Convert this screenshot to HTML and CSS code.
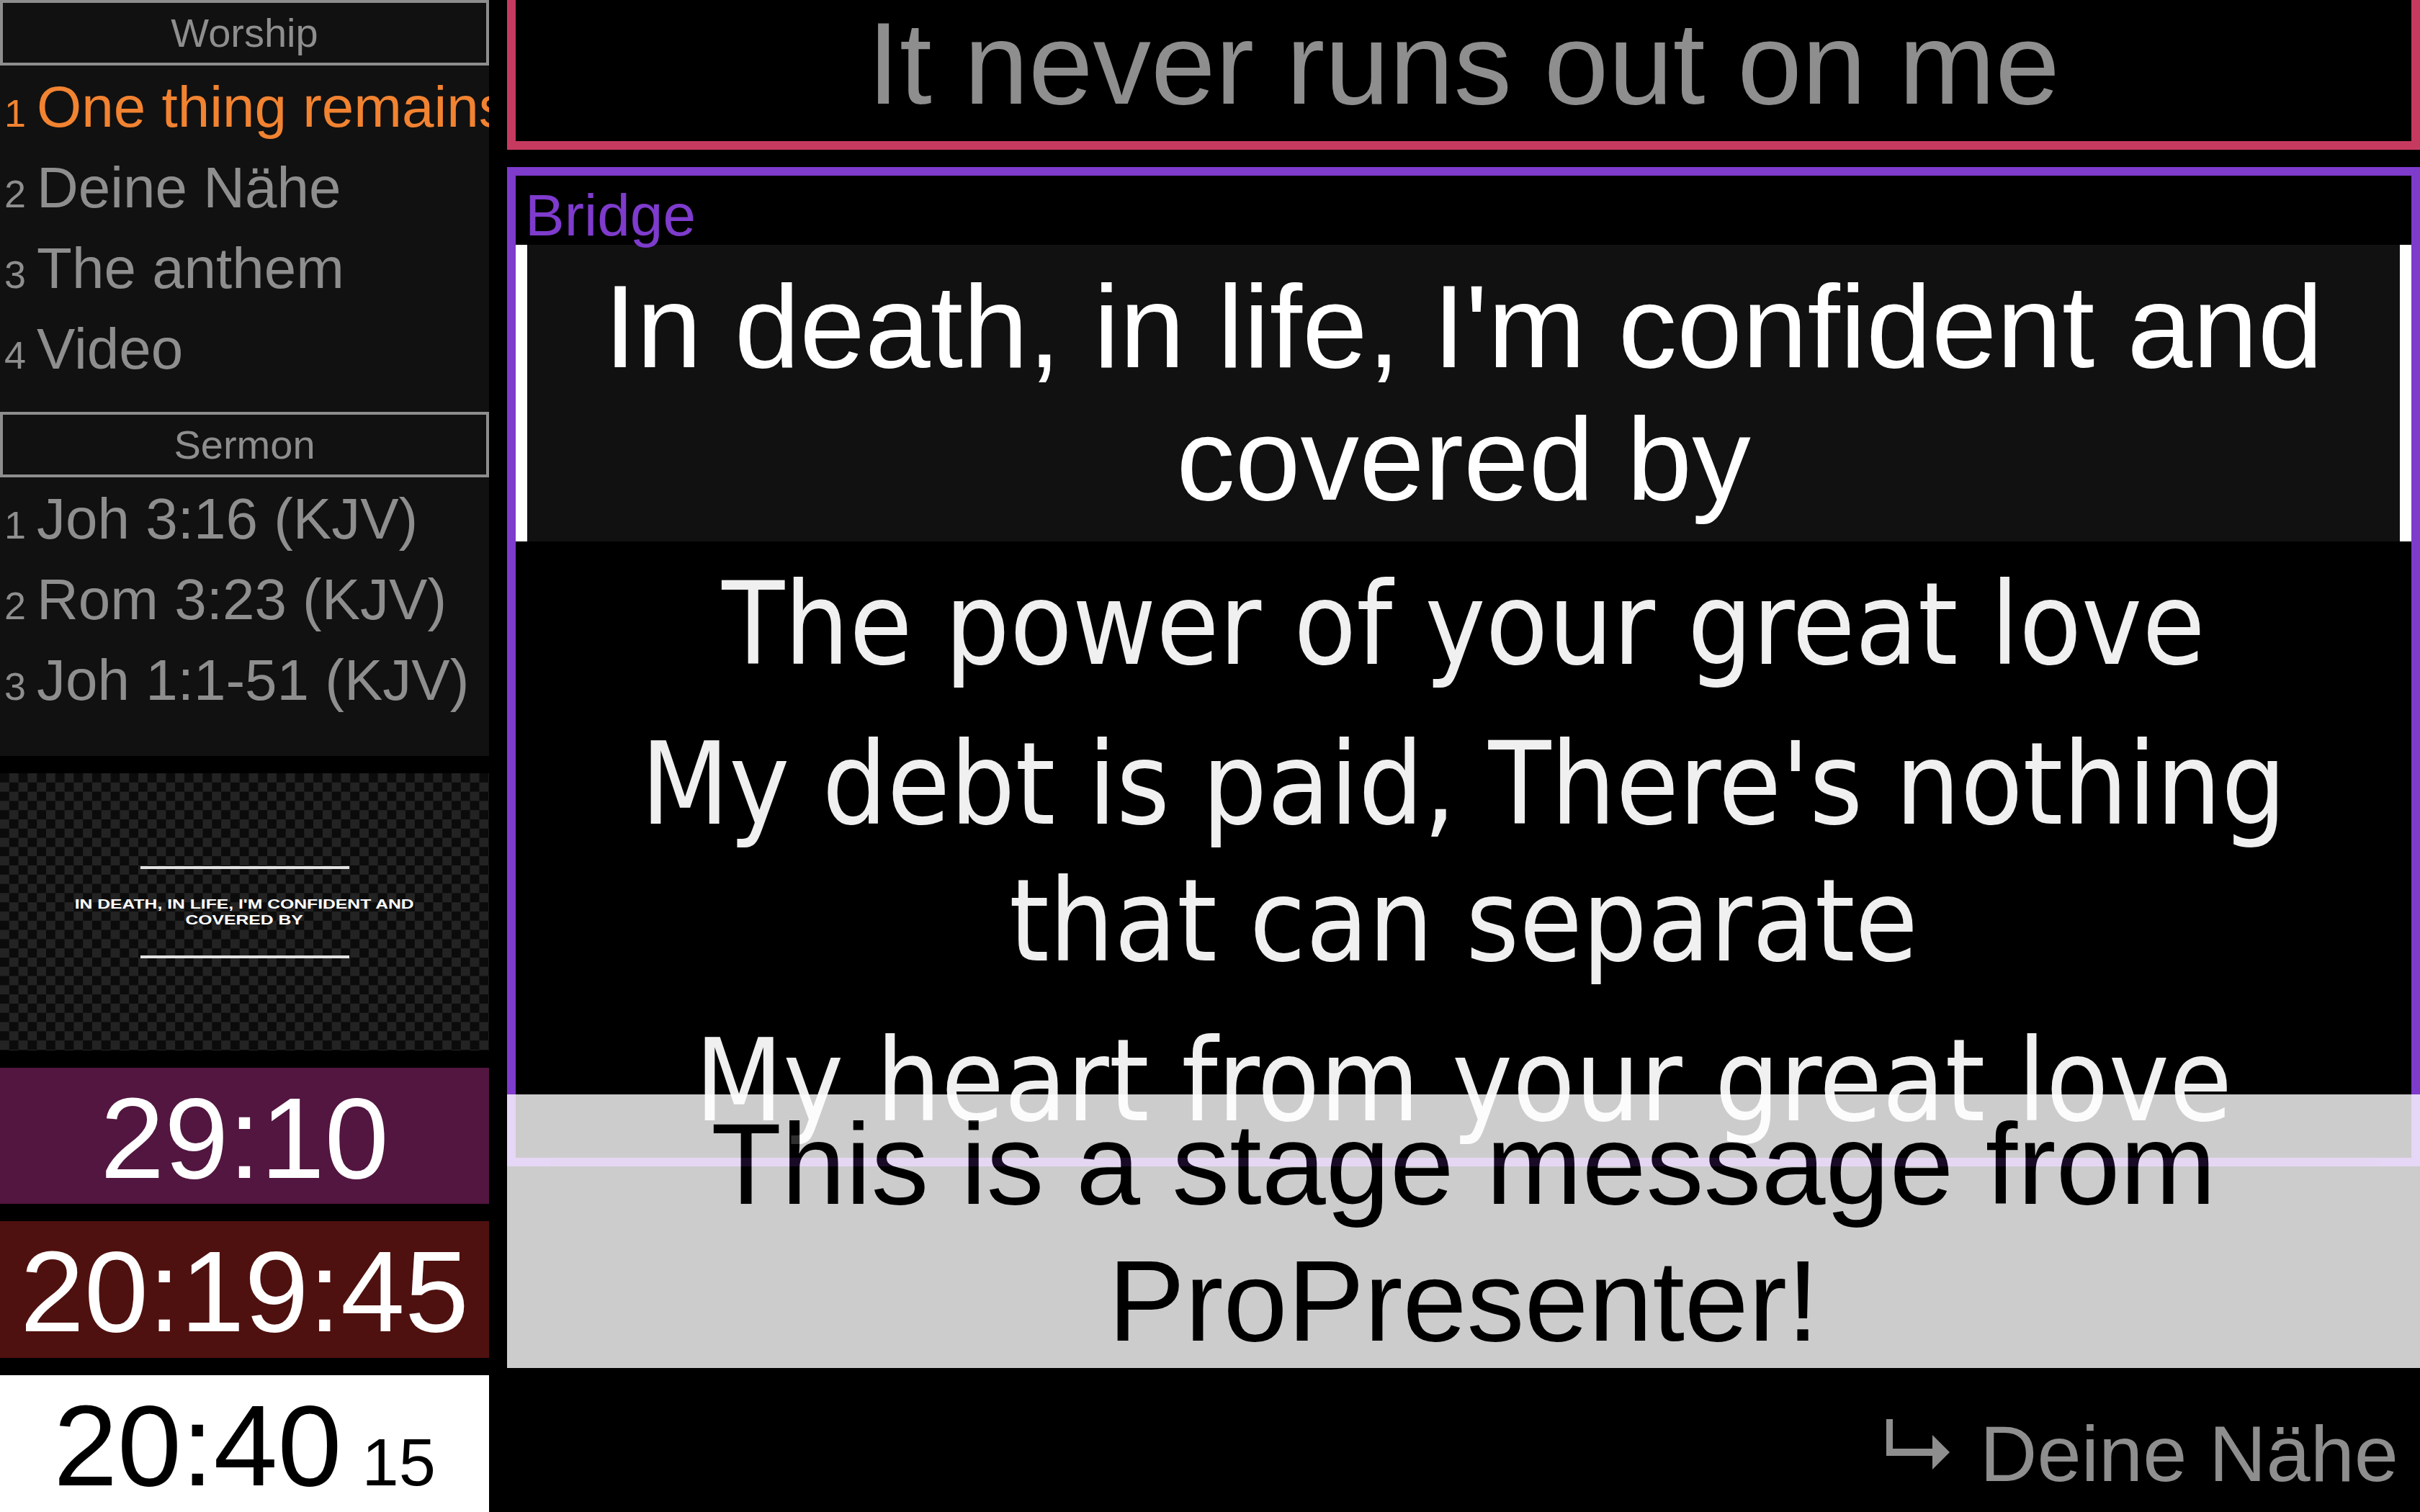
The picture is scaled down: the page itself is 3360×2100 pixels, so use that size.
FILE: index.html
```html
<!DOCTYPE html>
<html lang="en">
<head>
<meta charset="utf-8">
<title>Stage Display</title>
<link rel="stylesheet" href="styles.css">
</head>
<body>
<div class="stage">
  <aside class="side">
    <div class="panel">
      <section class="group">
        <div class="group-title">Worship</div>
        <ul class="items">
          <li class="item current"><span class="num">1 </span>One thing remains</li>
          <li class="item"><span class="num">2 </span>Deine Nähe</li>
          <li class="item"><span class="num">3 </span>The anthem</li>
          <li class="item"><span class="num">4 </span>Video</li>
        </ul>
      </section>
      <section class="group">
        <div class="group-title">Sermon</div>
        <ul class="items">
          <li class="item"><span class="num">1 </span>Joh 3:16 (KJV)</li>
          <li class="item"><span class="num">2 </span>Rom 3:23 (KJV)</li>
          <li class="item"><span class="num">3 </span>Joh 1:1-51 (KJV)</li>
        </ul>
      </section>
    </div>
    <div class="thumb">
      <div class="thumb-rule"></div>
      <div class="thumb-text">IN DEATH, IN LIFE, I'M CONFIDENT AND<br>COVERED BY</div>
      <div class="thumb-rule"></div>
    </div>
    <div class="timer timer-countdown">29:10</div>
    <div class="timer timer-event">20:19:45</div>
    <div class="timer clock">20:40<span class="secs">15</span></div>
  </aside>
  <main class="main">
    <div class="prev-slide">It never runs out on me</div>
    <div class="current-group">
      <div class="group-label">Bridge</div>
      <div class="slide slide-live">In death, in life, I'm confident and covered by</div>
      <div class="slide">The power of your great love</div>
      <div class="slide">My debt is paid, There's nothing<br>that can separate</div>
      <div class="slide">My heart from your great love</div>
    </div>
    <div class="next-song">
      <svg class="next-arrow" viewBox="0 0 88 70" aria-hidden="true">
        <rect x="0" y="0" width="9" height="51" fill="#8e8e8e"/>
        <rect x="0" y="41" width="66" height="10" fill="#8e8e8e"/>
        <polygon points="64,22 88,46 64,70" fill="#8e8e8e"/>
      </svg>
      <span class="next-title">Deine Nähe</span>
    </div>
    <div class="stage-message">This is a stage message from ProPresenter!</div>
  </main>
</div>
</body>
</html>
```

FILE: styles.css
```css
* {
  box-sizing: border-box;
}

html,
body {
  margin: 0;
  background: #000;
}

body {
  width: 3360px;
  height: 2100px;
  overflow: hidden;
  font-family: "Liberation Sans", Arial, Helvetica, sans-serif;
}

.stage {
  display: flex;
  gap: 25px;
  height: 2100px;
}

/* ---------- left column ---------- */

.side {
  width: 679px;
  flex: none;
  display: flex;
  flex-direction: column;
  gap: 24px;
}

.panel {
  height: 1050px;
  flex: none;
  background: #111;
  overflow: hidden;
  display: flex;
  flex-direction: column;
  gap: 31px;
}

.group-title {
  height: 91px;
  border: 4px solid #8e8e8e;
  color: #8e8e8e;
  font-size: 56px;
  line-height: 83px;
  text-align: center;
}

.items {
  list-style: none;
  margin: 0;
  padding: 2px 0 0 6px;
}

.item {
  height: 112px;
  font-size: 80px;
  line-height: 112px;
  color: #8e8e8e;
  white-space: nowrap;
}

.item.current {
  color: #f28331;
}

.num {
  font-size: 54px;
  line-height: 0;
}

.thumb {
  height: 385px;
  flex: none;
  background-color: #0b0b0b;
  background-image: conic-gradient(#232323 25%, #0b0b0b 0 50%, #232323 0 75%, #0b0b0b 0);
  background-size: 25.6px 25.6px;
  display: flex;
  flex-direction: column;
  align-items: center;
  justify-content: center;
  gap: 38px;
}

.thumb-rule {
  width: 290px;
  height: 4px;
  background: #e2e2e2;
}

.thumb-text {
  color: #fff;
  font-weight: 700;
  font-size: 19px;
  line-height: 22px;
  text-align: center;
  white-space: nowrap;
  transform: scaleX(1.3);
}

.timer {
  flex: none;
  height: 189px;
  padding-top: 6px;
  color: #fff;
  font-size: 160px;
  line-height: 183px;
  text-align: center;
  white-space: nowrap;
}

.timer-countdown {
  background: #521640;
}

.timer-event {
  height: 190px;
  background: #4f110f;
}

.clock {
  flex: 1;
  background: #fff;
  color: #000;
}

.secs {
  font-size: 92px;
  margin-left: 28px;
}

/* ---------- main column ---------- */

.main {
  flex: 1;
  min-width: 0;
  position: relative;
  display: flex;
  flex-direction: column;
  gap: 24px;
}

.prev-slide {
  flex: none;
  border: 12px solid #c63a60;
  border-top: 0;
  padding-bottom: 20px;
  color: #8e8e8e;
  font-size: 161px;
  line-height: 176px;
  text-align: center;
  white-space: nowrap;
  overflow: hidden;
}

.current-group {
  flex: none;
  height: 1388px;
  border: 12px solid #7e3bcc;
  overflow: hidden;
}

.group-label {
  color: #7e3bcc;
  font-size: 82px;
  line-height: 82px;
  padding: 14px 0 0 13px;
}

.slide {
  color: #f0f0f0;
  font-family: "DejaVu Sans Condensed", "DejaVu Sans", sans-serif;
  font-size: 158px;
  line-height: 190px;
  padding: 16px 0;
  text-align: center;
  white-space: nowrap;
}

.slide-live {
  font-family: "Liberation Sans", Arial, Helvetica, sans-serif;
  color: #fff;
  background: #111;
  border-left: 16px solid #fff;
  border-right: 16px solid #fff;
  font-size: 163px;
  line-height: 184px;
  padding: 22px 0;
  margin-bottom: 4px;
  white-space: normal;
}

.next-song {
  flex: 1;
  display: flex;
  justify-content: flex-end;
  align-items: flex-end;
  padding: 0 30px 18px 0;
  color: #8e8e8e;
  font-size: 110px;
  line-height: 126px;
}

.next-arrow {
  width: 88px;
  height: 70px;
  flex: none;
  margin: 0 42px 41px 0;
}

.stage-message {
  position: absolute;
  left: 0;
  right: 0;
  top: 1520px;
  height: 380px;
  padding-top: 2px;
  background: #fff;
  color: #000;
  opacity: 0.8;
  font-size: 160px;
  line-height: 190px;
  text-align: center;
}
```
